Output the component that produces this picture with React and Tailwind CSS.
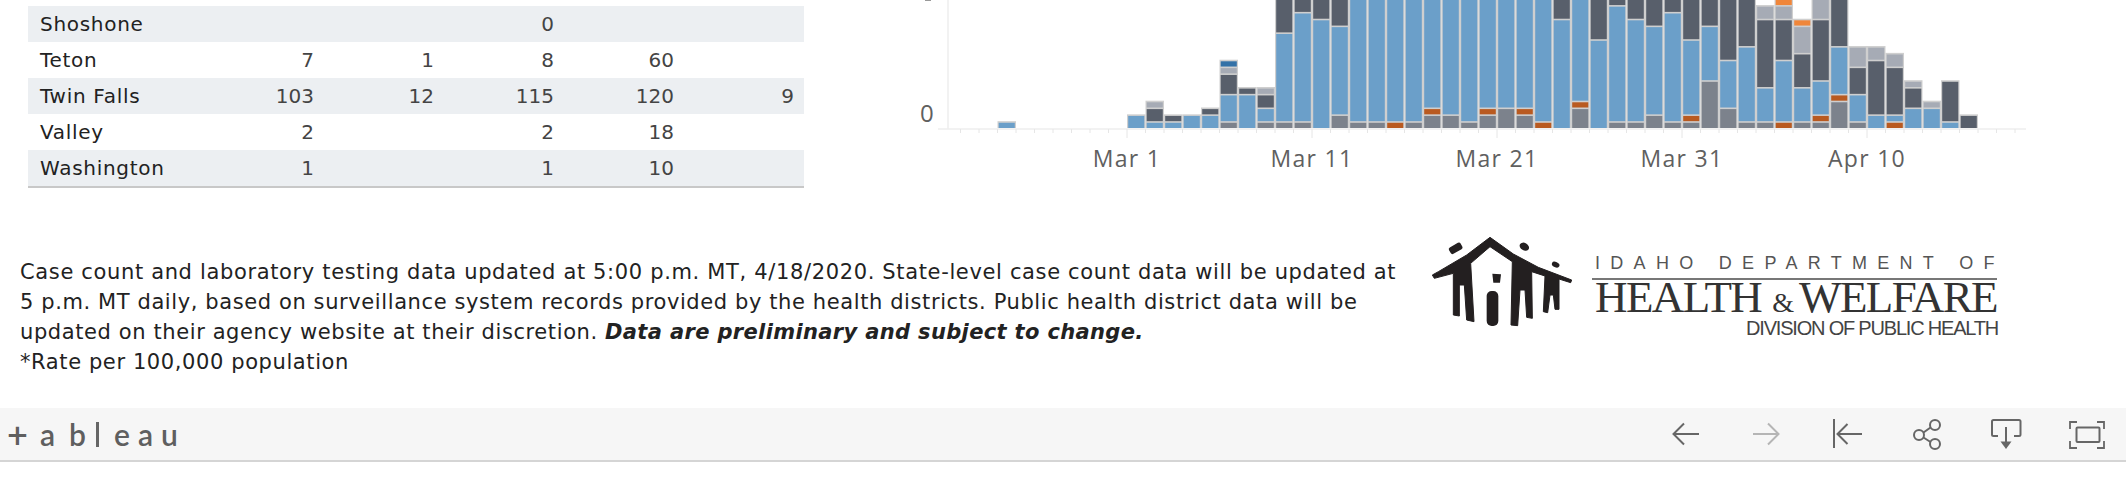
const rows = [
    ['Shoshone', '', '', '0', '', ''],
    ['Teton', '7', '1', '8', '60', ''],
    ['Twin Falls', '103', '12', '115', '120', '9'],
    ['Valley', '2', '', '2', '18', ''],
    ['Washington', '1', '', '1', '10', ''],
];

const colors = {
    b: '#6b9fc9',
    d: '#585f6b',
    g: '#7c828c',
    l: '#a6abb5',
    o: '#b95a20',
    y: '#f0863a',
    n: '#3371a7',
};

// bottom to top, [color, units]. Tall bars run off the top of the picture.
const bars = {
    '-7': [['b', 1]],
    0: [['b', 2]],
    1: [['b', 1], ['d', 2], ['l', 1]],
    2: [['b', 1], ['d', 1]],
    3: [['b', 2]],
    4: [['b', 2], ['d', 1]],
    5: [['g', 1], ['b', 4], ['d', 3], ['l', 1], ['n', 1]],
    6: [['b', 5], ['d', 1]],
    7: [['g', 1], ['b', 2], ['d', 2], ['l', 1]],
    8: [['g', 1], ['b', 13], ['d', 30]],
    9: [['g', 1], ['b', 16], ['d', 30]],
    10: [['b', 16], ['d', 30]],
    11: [['g', 2], ['b', 13], ['d', 30]],
    12: [['g', 1], ['b', 30]],
    13: [['g', 1], ['b', 30]],
    14: [['o', 1], ['b', 30]],
    15: [['g', 1], ['b', 30]],
    16: [['g', 2], ['o', 1], ['b', 30]],
    17: [['g', 2], ['b', 30]],
    18: [['g', 1], ['b', 30]],
    19: [['g', 2], ['o', 1], ['b', 30]],
    20: [['g', 3], ['b', 30]],
    21: [['g', 2], ['o', 1], ['b', 30]],
    22: [['o', 1], ['b', 30]],
    23: [['b', 16], ['d', 30]],
    24: [['g', 3], ['o', 1], ['b', 30]],
    25: [['b', 13], ['d', 30]],
    26: [['g', 1], ['b', 17], ['d', 30]],
    27: [['g', 1], ['b', 15], ['d', 30]],
    28: [['g', 2], ['b', 13], ['d', 30]],
    29: [['g', 1], ['b', 16], ['d', 30]],
    30: [['g', 1], ['o', 1], ['b', 11], ['d', 30]],
    31: [['g', 7], ['b', 8], ['d', 30]],
    32: [['g', 3], ['b', 7], ['d', 30]],
    33: [['g', 1], ['b', 11], ['d', 30]],
    34: [['g', 1], ['b', 5], ['d', 10], ['l', 2]],
    35: [['o', 1], ['b', 9], ['d', 6], ['l', 2], ['y', 1]],
    36: [['g', 1], ['b', 5], ['d', 5], ['l', 4], ['y', 1]],
    37: [['g', 1], ['o', 1], ['b', 5], ['d', 9], ['l', 30]],
    38: [['g', 4], ['o', 1], ['b', 7], ['d', 30]],
    39: [['g', 1], ['b', 4], ['d', 4], ['l', 3]],
    40: [['b', 2], ['d', 8], ['l', 2]],
    41: [['o', 1], ['b', 1], ['d', 7], ['l', 2]],
    42: [['b', 3], ['d', 3], ['l', 1]],
    43: [['b', 3], ['l', 1]],
    44: [['b', 1], ['d', 6]],
    45: [['d', 2]],
};

const BASE = 128;
const UNIT = 6.83;
const DAY = 18.5;
const dayX = (i) => 227 + DAY * i;

const labels = [
    [0, 'Mar 1'],
    [10, 'Mar 11'],
    [20, 'Mar 21'],
    [30, 'Mar 31'],
    [40, 'Apr 10'],
];

function Chart() {
    const ticks = [];
    for (let i = -9; i <= 48; i++) ticks.push(i);

    return (
        <svg width="1130" height="176" viewBox="0 0 1130 176" className="block shrink-0">
            <rect x="25" y="0" width="6" height="1" fill="#999999" />
            <line x1="48" y1="0" x2="48" y2="129" stroke="#eeeeee" strokeWidth="1.5" />
            <line x1="38" y1="129" x2="1126" y2="129" stroke="#eeeeee" strokeWidth="1.5" />
            {ticks.map((i) => (
                <line
                    key={i}
                    x1={dayX(i)}
                    y1="129"
                    x2={dayX(i)}
                    y2={i % 10 === 0 ? 138 : 133}
                    stroke="#e6e6e6"
                    strokeWidth="1"
                />
            ))}
            {Object.entries(bars).map(([day, segs]) => {
                const x = dayX(Number(day));
                let sum = 0;
                const total = segs.reduce((acc, s) => acc + s[1], 0);
                return (
                    <g key={day}>
                        <rect x={x} y={BASE - total * UNIT} width={DAY} height={total * UNIT} fill="#cfcfcf" />
                        {segs.map(([c, n], idx) => {
                            const y = BASE - (sum + n) * UNIT;
                            sum += n;
                            return (
                                <rect key={idx} x={x + 1.2} y={y + 1.6} width={DAY - 2.4} height={n * UNIT - 1.6} fill={colors[c]} />
                            );
                        })}
                    </g>
                );
            })}
            <text x="20" y="122" className="fill-[#606060] font-['Open_Sans'] text-[24px]">0</text>
            {labels.map(([i, t]) => (
                <text
                    key={t}
                    x={dayX(i)}
                    y="167"
                    textAnchor="middle"
                    className="fill-[#606060] font-['Open_Sans'] text-[23px] tracking-[1.3px]"
                >
                    {t}
                </text>
            ))}
        </svg>
    );
}

function HouseIcon() {
    return (
        <svg width="155" height="105" viewBox="0 0 465 315" className="block shrink-0" fill="#231f20">
            <path
                d="M22 135 L40 125 L125 75 L195 22 L265 72 L340 112 L440 150 L437 158 L402 147 L402 238 L390 238 L385 195 L375 195 L368 248 L355 245 L360 138 L320 125 L322 265 L305 262 L300 180 L285 180 L278 287 L258 285 L262 95 L195 50 L137 100 L147 275 L125 270 L118 165 L103 165 L103 258 L85 255 L85 130 L28 145 Z"
                stroke="#231f20"
                strokeWidth="3"
                strokeLinejoin="round"
            />
            <rect x="72" y="44" width="40" height="22" rx="6" transform="rotate(-30 92 55)" />
            <ellipse cx="298" cy="50" rx="15" ry="11" transform="rotate(30 298 50)" />
            <ellipse cx="392" cy="104" rx="12" ry="8" transform="rotate(25 392 104)" />
            <path d="M202 131 L228 133 L225 158 L205 158 Z" />
            <rect x="185" y="183" width="35" height="105" rx="15" />
        </svg>
    );
}

function ToolIcon({ children }) {
    return (
        <div className="flex w-20 justify-center">
            <svg width="36" height="36" viewBox="0 0 36 36" fill="none" stroke="#666666" strokeWidth="2" className="overflow-visible">
                {children}
            </svg>
        </div>
    );
}

export default function App() {
    return (
        <div className="flex h-[482px] w-[2126px] flex-col overflow-hidden bg-white font-['DejaVu_Sans',sans-serif]">
            {/* Table and chart */}
            <div className="flex h-[230px] shrink-0">
                <div className="ml-[28px] w-[776px] shrink-0 pt-[6px]">
                    <div className="border-b-2 border-[#c8c8c8] text-[20px]">
                        {rows.map((row, i) => (
                            <div key={row[0]} className={`flex h-[36px] items-center pr-[10px] ${i % 2 === 0 ? 'bg-[#eceff2]' : 'bg-white'}`}>
                                <div className="w-[166px] pl-[12px] tracking-[0.7px] text-[#222222]">{row[0]}</div>
                                {row.slice(1).map((v, j) => (
                                    <div key={j} className="w-[120px] text-right text-[#444444]">{v}</div>
                                ))}
                            </div>
                        ))}
                    </div>
                </div>
                <div className="ml-[96px]">
                    <Chart />
                </div>
            </div>

            {/* Notes and logo */}
            <div className="flex h-[120px] shrink-0 overflow-visible">
                <p className="w-[1425px] shrink-0 pl-[20px] pt-[27px] text-[21px] leading-[30px] tracking-[0.6px] whitespace-nowrap text-[#222222]">
                    <span className="tracking-[0.65px]">Case count and laboratory testing data updated at 5:00 p.m. MT, 4/18/2020. State-level case count data will be updated at</span>
                    <br />
                    5 p.m. MT daily, based on surveillance system records provided by the health districts. Public health district data will be
                    <br />
                    updated on their agency website at their discretion. <b className="italic tracking-[0.35px]">Data are preliminary and subject to change.</b>
                    <br />
                    *Rate per 100,000 population
                </p>
                <HouseIcon />
                <div className="ml-[12px] w-[408px] shrink-0 pt-[24px]">
                    <div className="pl-[3px] font-['Liberation_Sans'] text-[18px] leading-[18px] tracking-[10.3px] whitespace-nowrap text-[#555555]">
                        IDAHO DEPARTMENT OF
                    </div>
                    <div className="mt-[6px] h-[2px] w-[405px] bg-[#777777]" />
                    <div className="mt-[-5px] flex items-baseline pl-[3px] font-['Liberation_Serif'] text-[45px] leading-[45px] tracking-[-1.6px] whitespace-nowrap text-[#333333]">
                        <span>HEALTH</span>
                        <span className="mr-[5px] ml-[11px] text-[28px] tracking-normal">&amp;</span>
                        <span>WELFARE</span>
                    </div>
                    <div className="mt-[-7px] pr-[2px] text-right font-['Liberation_Sans'] text-[20px] leading-[20px] tracking-[-1.2px] whitespace-nowrap text-[#444444]">
                        DIVISION OF PUBLIC HEALTH
                    </div>
                </div>
            </div>

            {/* Toolbar */}
            <div className="mt-[58px] flex h-[54px] shrink-0 items-center border-b-2 border-[#d5d5d5] bg-[#f6f6f6]">
                <div className="flex items-center pl-[7px] font-['Lato',sans-serif] text-[30px] font-semibold text-[#5f5f5f]">
                    <span className="w-[33px] text-[36px] leading-none">+</span>
                    <span className="w-[29px]">a</span>
                    <span className="w-[27px]">b</span>
                    <span className="mr-[15px] h-[25px] w-[3px] bg-[#666666]" />
                    <span className="w-[24px]">e</span>
                    <span className="w-[23px]">a</span>
                    <span>u</span>
                </div>
                <div className="ml-auto flex items-center">
                    <ToolIcon>
                        <path d="M31 18 H6 M16 7.5 L5.5 18 L16 28.5" />
                    </ToolIcon>
                    <ToolIcon>
                        <path d="M5 18 H30 M20 7.5 L30.5 18 L20 28.5" stroke="#b5b5b5" />
                    </ToolIcon>
                    <ToolIcon>
                        <path d="M6 3 V32 M34 18 H10 M19.5 8 L9.5 18 L19.5 28" />
                    </ToolIcon>
                    <ToolIcon>
                        <circle cx="11" cy="19" r="5" />
                        <circle cx="27" cy="9" r="5" />
                        <circle cx="27" cy="28" r="5" />
                        <path d="M15.5 16.5 L22.5 11.5 M15.5 21.5 L22.5 26" />
                    </ToolIcon>
                    <ToolIcon>
                        <path d="M10 20 H5.5 Q4 20 4 18.5 V5.5 Q4 4 5.5 4 H31 Q32.5 4 32.5 5.5 V18.5 Q32.5 20 31 20 H26 M18 11 V26" />
                        <path d="M12.5 25.5 H23.5 L18 33 Z" fill="#666666" stroke="none" />
                    </ToolIcon>
                    <ToolIcon>
                        <rect x="8.5" y="11.5" width="23" height="14.5" rx="1" />
                        <path d="M2 13 V6 H9 M29 6 H36 V13 M2 25 V32 H9 M29 32 H36 V25" strokeWidth="1.8" />
                    </ToolIcon>
                </div>
            </div>
        </div>
    );
}
